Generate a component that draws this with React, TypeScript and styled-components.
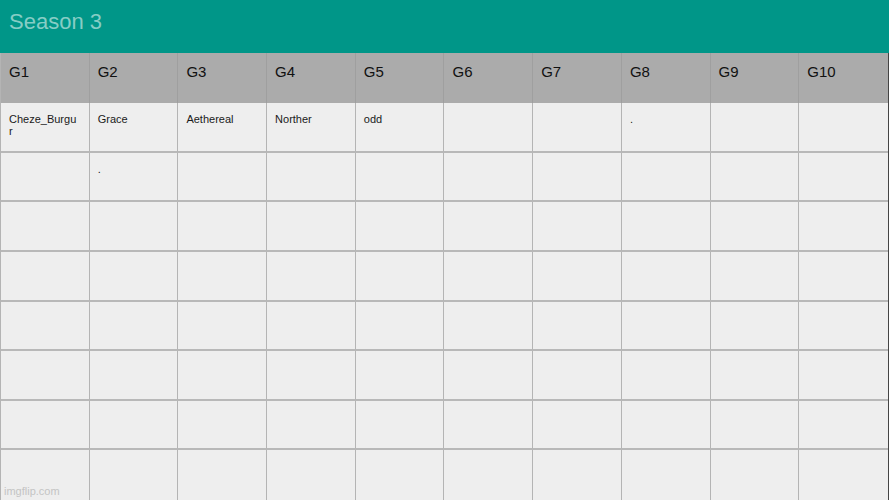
import React from "react";
import styled, { createGlobalStyle } from "styled-components";

const Global = createGlobalStyle`
  html, body { margin: 0; padding: 0; background: #eeeeee; }
  body { font-family: "Liberation Sans", Arial, sans-serif; }
`;

const Page = styled.div`
  position: relative;
  width: 889px;
  height: 500px;
  display: flex;
  flex-direction: column;
  overflow: hidden;
  background: #eeeeee;
`;

const TitleBar = styled.div`
  height: 53px;
  flex: none;
  background: #009688;
  display: flex;
  align-items: center;
  padding: 0 0 9px 9px;
  box-sizing: border-box;
  color: #86cdc5;
  font-size: 22px;
`;

const Table = styled.div`
  flex: 1;
  display: grid;
  grid-template-columns: repeat(10, 1fr);
  grid-template-rows: 50px repeat(8, 1fr);
  border-left: 1px solid #b4b4b4;
  border-right: 1px solid #444;
`;

const HeadCell = styled.div`
  background: #ababab;
  border-right: 1px solid #9f9f9f;
  padding: 10px 8px 0;
  font-size: 15px;
  color: #111;
  box-sizing: border-box;
  &:nth-child(10) { border-right: none; }
`;

const Cell = styled.div<{ $last?: boolean; $bottom?: boolean }>`
  background: #eeeeee;
  border-right: ${(p) => (p.$last ? "none" : "1px solid #b4b4b4")};
  border-bottom: ${(p) => (p.$bottom ? "none" : "2px solid #b8b8b8")};
  padding: 10px 11px 0 8px;
  font-size: 11px;
  line-height: 12px;
  color: #1a1a1a;
  word-break: break-all;
  box-sizing: border-box;
  min-width: 0;
`;

const Watermark = styled.div`
  position: absolute;
  left: 4px;
  bottom: 3px;
  font-size: 11px;
  color: #c4c4c4;
`;

const heads = ["G1", "G2", "G3", "G4", "G5", "G6", "G7", "G8", "G9", "G10"];
const rows: string[][] = [
  ["Cheze_Burgur", "Grace", "Aethereal", "Norther", "odd", "", "", ".", "", ""],
  ["", ".", "", "", "", "", "", "", "", ""],
  ...Array.from({ length: 6 }, () => Array(10).fill("")),
];

export default function App() {
  return (
    <Page>
      <Global />
      <TitleBar>Season 3</TitleBar>
      <Table>
        {heads.map((h) => (
          <HeadCell key={h}>{h}</HeadCell>
        ))}
        {rows.map((r, i) =>
          r.map((c, j) => (
            <Cell key={`${i}-${j}`} $last={j === 9} $bottom={i === rows.length - 1}>
              {c}
            </Cell>
          ))
        )}
      </Table>
      <Watermark>imgflip.com</Watermark>
    </Page>
  );
}
